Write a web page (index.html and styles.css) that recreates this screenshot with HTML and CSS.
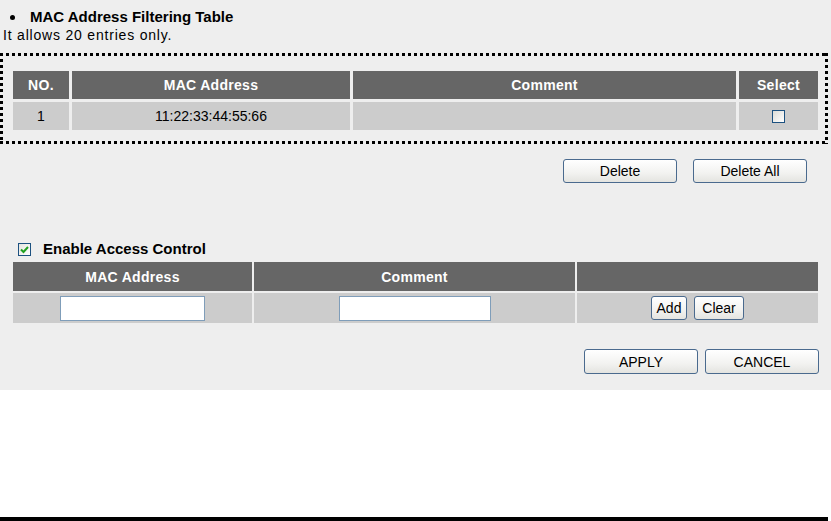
FILE: index.html
```html
<html>

<head>
  <meta charset="UTF-8">
  <title>MAC Address Filtering</title>
  <link rel="stylesheet" href="styles.css">
</head>

<body>
  <div id="panel">
    <div class="title"><span class="bullet"></span>MAC Address Filtering Table</div>
    <div class="note">It allows 20 entries only.</div>

    <!-- current list -->
    <div class="filterBox">
      <table class="grid listTable">
        <tr>
          <th class="colNo">NO.</th>
          <th class="colMac">MAC Address</th>
          <th class="colComment">Comment</th>
          <th class="colSelect">Select</th>
        </tr>
        <tr>
          <td>1</td>
          <td>11:22:33:44:55:66</td>
          <td></td>
          <td><span class="check"></span></td>
        </tr>
      </table>
    </div>

    <div class="actions deleteRow">
      <button class="btn wide">Delete</button>
      <button class="btn wide">Delete All</button>
    </div>

    <div class="enable">
      <span class="check">
        <svg width="11" height="11" viewBox="0 0 11 11"><path d="M2 5.5 L4.5 8 L9 3" fill="none" stroke="#21a121" stroke-width="2"/></svg>
      </span>
      Enable Access Control
    </div>

    <!-- new entry -->
    <table class="grid addTable">
      <tr>
        <th class="colMac2">MAC Address</th>
        <th class="colComment2">Comment</th>
        <th class="colBtn2"></th>
      </tr>
      <tr>
        <td><input class="field macField" type="text"></td>
        <td><input class="field commentField" type="text"></td>
        <td>
          <div class="cellButtons">
            <button class="btn addBtn">Add</button>
            <button class="btn clearBtn">Clear</button>
          </div>
        </td>
      </tr>
    </table>

    <div class="actions applyRow">
      <button class="btn wide">APPLY</button>
      <button class="btn wide">CANCEL</button>
    </div>
  </div>

  <div class="pageEnd"></div>
</body>

</html>
```

FILE: styles.css
```css
body {
  margin: 0;
  font-family: "Liberation Sans", Arial, sans-serif;
  color: #000;
  background: #fff;
}

#panel {
  height: 390px;
  box-sizing: border-box;
  padding-top: 8px;
  background-color: #eeeeee;
}

.title {
  font-size: 15px;
  font-weight: bold;
  line-height: 18px;
  padding-left: 10px;
}

.bullet {
  display: inline-block;
  width: 5px;
  height: 5px;
  border-radius: 50%;
  background: #000;
  margin-right: 15px;
  vertical-align: 2px;
}

.note {
  font-size: 14px;
  line-height: 16px;
  letter-spacing: 0.8px;
  padding-left: 3px;
  margin-top: 1px;
}

/* dotted frame round the list, square dots */
.filterBox {
  width: 828px;
  box-sizing: border-box;
  margin-top: 10px;
  padding: 15px 0 11px 10px;
  background:
    repeating-linear-gradient(90deg, #000 0 3px, transparent 3px 6px) left top / 100% 3px no-repeat,
    repeating-linear-gradient(90deg, #000 0 3px, transparent 3px 6px) left bottom / 100% 3px no-repeat,
    repeating-linear-gradient(180deg, #000 0 3px, transparent 3px 6px) left top / 3px 100% no-repeat,
    repeating-linear-gradient(180deg, #000 0 3px, transparent 3px 6px) right top / 3px 100% no-repeat;
}

.grid {
  border-collapse: separate;
  table-layout: fixed;
}

.grid th {
  background-color: #666666;
  color: #fff;
  font-size: 14px;
  font-weight: bold;
  letter-spacing: 0.3px;
  padding: 0;
  text-align: center;
}

.grid td {
  background-color: #cccccc;
  font-size: 14px;
  padding: 0;
  text-align: center;
}

.listTable {
  border-spacing: 3px;
  width: 811px;
}

.listTable th,
.listTable td {
  height: 28px;
}

.colNo { width: 56px; }
.colMac { width: 278px; }
.colComment { width: 383px; }
.colSelect { width: 79px; }

.check {
  display: inline-block;
  width: 13px;
  height: 13px;
  box-sizing: border-box;
  border: 1px solid #1c5180;
  background: linear-gradient(135deg, #dcdcd7, #ffffff);
  vertical-align: middle;
}

.check svg {
  display: block;
}

.actions {
  display: flex;
  justify-content: flex-end;
}

.deleteRow {
  margin-top: 15px;
  padding-right: 24px;
  gap: 16px;
}

.applyRow {
  margin-top: 24px;
  padding-right: 12px;
  gap: 7px;
}

.btn {
  height: 24px;
  box-sizing: border-box;
  padding: 0;
  font-family: "Liberation Sans", Arial, sans-serif;
  font-size: 14px;
  color: #000;
  border: 1px solid #4a6a8e;
  border-radius: 3px;
  background: linear-gradient(#ffffff, #f2f2f0 60%, #e4e4e0);
}

.btn.wide {
  width: 114px;
}

.applyRow .btn {
  height: 25px;
}

.cellButtons {
  display: flex;
  justify-content: center;
  gap: 7px;
}

.addBtn { width: 36px; }
.clearBtn { width: 50px; }

.enable {
  margin-top: 57px;
  padding-left: 18px;
  font-size: 15px;
  font-weight: bold;
  line-height: 18px;
  display: flex;
  align-items: center;
  gap: 12px;
}

.enable .check {
  background: linear-gradient(135deg, #e4e4de, #ffffff);
}

.addTable {
  margin-top: 2px;
  margin-left: 11px;
  border-spacing: 2px;
  width: 809px;
}

.addTable th {
  height: 29px;
}

.addTable td {
  height: 30px;
}

.colMac2 { width: 239px; }
.colComment2 { width: 321px; }
.colBtn2 { width: 241px; }

.field {
  height: 25px;
  box-sizing: border-box;
  border: 1px solid #7f9db9;
  background: #fff;
  padding: 0 3px;
  vertical-align: middle;
}

.macField { width: 145px; }
.commentField { width: 152px; }

.pageEnd {
  margin-top: 127px;
  width: 828px;
  height: 4px;
  background: #000;
}
```
